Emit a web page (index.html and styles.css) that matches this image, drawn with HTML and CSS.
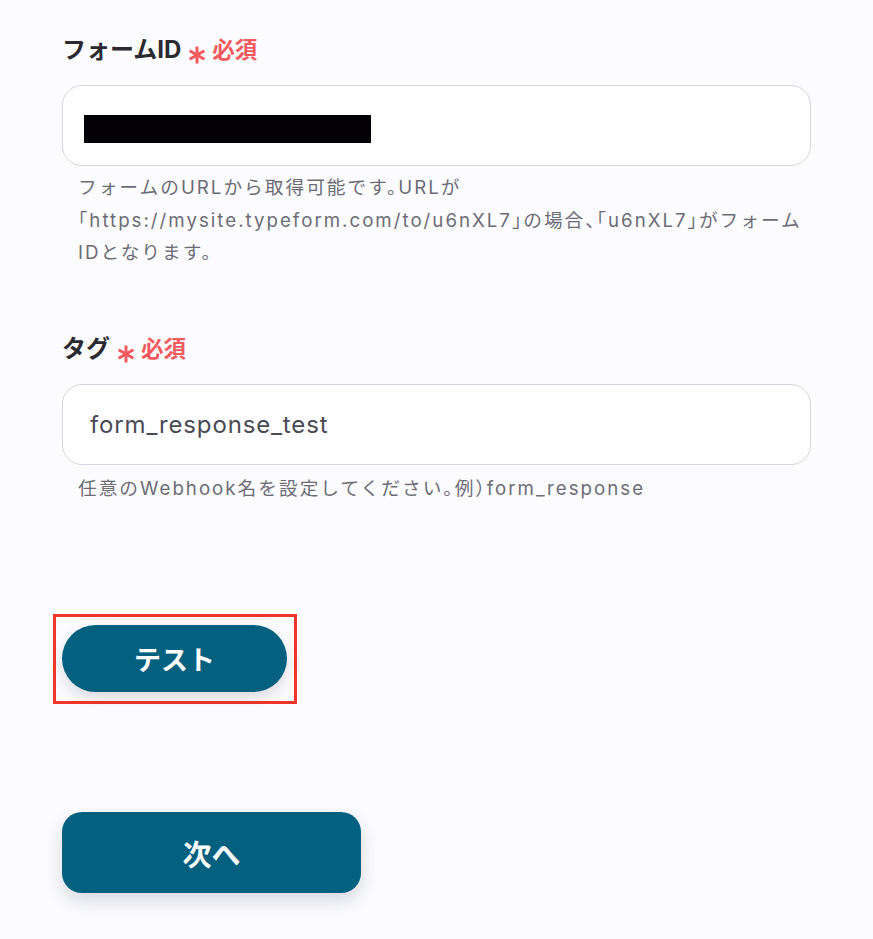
FILE: index.html
```html
<!DOCTYPE html>
<html lang="ja">
<head>
<meta charset="utf-8">
<link rel="stylesheet" href="styles.css">
</head>
<body>
<main class="form">
  <section class="field field-first">
    <div class="field-label">フォームID<span class="req"><svg class="star" viewBox="0 0 18 18" width="18" height="18"><path d="M9 0.5V17.5M1.64 4.75L16.36 13.25M1.64 13.25L16.36 4.75" stroke="currentColor" stroke-width="3" fill="none"/></svg>必須</span></div>
    <div class="input"><span class="masked"></span></div>
    <p class="help">フォームのURLから取得可能です。URLが「https://mysite.typeform.com/to/u6nXL7」の場合、「u6nXL7」がフォームIDとなります。</p>
  </section>
  <section class="field field-second">
    <div class="field-label">タグ<span class="req"><svg class="star" viewBox="0 0 18 18" width="18" height="18"><path d="M9 0.5V17.5M1.64 4.75L16.36 13.25M1.64 13.25L16.36 4.75" stroke="currentColor" stroke-width="3" fill="none"/></svg>必須</span></div>
    <div class="input"><span class="value">form_response_test</span></div>
    <p class="help">任意のWebhook名を設定してください。例）form_response</p>
  </section>
  <div class="highlight"><button class="btn-test">テスト</button></div>
  <div class="next-row"><button class="btn-next">次へ</button></div>
</main>
</body>
</html>
```
FILE: styles.css
```css
* { box-sizing: border-box; }
html, body { margin: 0; padding: 0; background: #fcfcfe; }
body {
  font-family: "Inter", "Noto Sans CJK JP", sans-serif;
  width: 873px;
  height: 939px;
  overflow: hidden;
}
.form {
  padding: 37px 62px 0 62px;
  width: 873px;
}
.field { display: flex; flex-direction: column; }
.field-second { margin-top: 66.5px; }
.field-label {
  font-size: 24px;
  line-height: 26px;
  height: 26px;
  font-weight: 700;
  color: #2a2a30;
  display: flex;
  align-items: center;
}
.req {
  color: #f25a5e;
  font-weight: 700;
  font-size: 22.5px;
  display: flex;
  align-items: center;
  margin-left: 7px;
}
.star {
  display: block;
  margin: 10px 6px 0 0;
}
.input {
  margin-top: 22px;
  width: 749px;
  height: 81px;
  border: 1px solid #d5d5e0;
  border-radius: 20px;
  background: #fefeff;
  display: flex;
  align-items: center;
  padding-left: 21px;
}
.masked {
  display: block;
  width: 287px;
  height: 28px;
  background: #020005;
  margin-top: 6px;
}
.value {
  font-size: 24px;
  letter-spacing: 0.85px;
  color: #4a4a55;
  padding-left: 6px;
}
.help {
  margin: 6px 0 0 16px;
  width: 728px;
  font-size: 18.7px;
  letter-spacing: 2px;
  line-height: 32.5px;
  color: #6c6c76;
  font-feature-settings: "halt";
}
.field-second .help { margin-top: 8px; }
.highlight {
  margin: 108.5px 0 0 -9px;
  border: 3px solid #f0362a;
  padding: 8px 7px 9px 6px;
  width: 244px;
}
.btn-test {
  display: block;
  width: 225px;
  height: 67px;
  border: none;
  border-radius: 34px;
  background: #04607f;
  color: #fff;
  font-family: "Noto Sans CJK JP", sans-serif;
  font-size: 27px;
  font-weight: 700;
  box-shadow: 0 6px 14px rgba(20, 30, 70, 0.15);
}
.next-row { margin-top: 108px; }
.btn-next {
  display: block;
  width: 299px;
  height: 81px;
  border: none;
  border-radius: 20px;
  background: #04607f;
  color: #fff;
  font-family: "Noto Sans CJK JP", sans-serif;
  font-size: 29px;
  font-weight: 700;
  box-shadow: 0 8px 18px rgba(20, 30, 70, 0.16);
}
```
